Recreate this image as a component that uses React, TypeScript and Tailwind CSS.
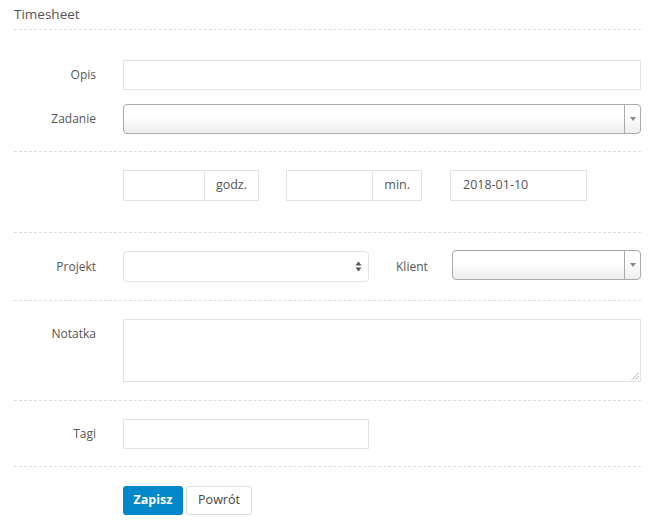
import React from "react";

const font = { fontFamily: '"Open Sans", "Liberation Sans", sans-serif' };

function Label({ children, top = false }: { children: React.ReactNode; top?: boolean }) {
  return (
    <div
      className={`w-[82px] mr-[27px] shrink-0 text-right text-[12px] text-[#555] ${
        top ? "pt-[6px]" : "self-center"
      }`}
    >
      {children}
    </div>
  );
}

function ChosenSelect({ className = "" }: { className?: string }) {
  return (
    <div
      className={`flex h-[30px] rounded-[4px] border border-[#aaa] bg-gradient-to-b from-white from-40% to-[#eee] ${className}`}
    >
      <div className="flex-1" />
      <div className="flex w-[16px] items-center justify-center border-l border-[#aaa]">
        <svg width="6" height="4" viewBox="0 0 6 4">
          <path d="M0 0 L6 0 L3 4 Z" fill="#888" />
        </svg>
      </div>
    </div>
  );
}

function Dash() {
  return <div className="border-t border-dashed border-[#ddd]" />;
}

export default function App() {
  return (
    <div className="w-[655px] h-[528px] bg-white px-[14px]" style={font}>
      <div className="pt-[4px] pb-[5px] text-[13.5px] leading-[20px] text-[#555]">Timesheet</div>
      <Dash />

      {/* Section 1 */}
      <div className="pt-[30px] pb-[17px]">
        <div className="flex h-[30px]">
          <Label>Opis</Label>
          <div className="h-[30px] flex-1 border border-[#e3e3e3] bg-white" />
        </div>
        <div className="mt-[14px] flex">
          <Label>Zadanie</Label>
          <ChosenSelect className="flex-1" />
        </div>
      </div>
      <Dash />

      {/* Section 2 */}
      <div className="pt-[18px] pb-[31px]">
        <div className="flex h-[31px] pl-[109px] text-[12.5px] text-[#555]">
          <div className="flex w-[136px] border border-[#e3e3e3]">
            <div className="flex-1" />
            <div className="flex items-center border-l border-[#e3e3e3] px-[11px]">godz.</div>
          </div>
          <div className="ml-[27px] flex w-[136px] border border-[#e3e3e3]">
            <div className="flex-1" />
            <div className="flex items-center border-l border-[#e3e3e3] px-[11px]">min.</div>
          </div>
          <div className="ml-[28px] flex w-[137px] items-center border border-[#e3e3e3] px-[12px]">
            2018-01-10
          </div>
        </div>
      </div>
      <Dash />

      {/* Section 3 */}
      <div className="pt-[18px] pb-[18px]">
        <div className="flex h-[31px]">
          <Label>Projekt</Label>
          <div className="flex w-[246px] items-center justify-end rounded-[4px] border border-[#e3e3e3] pr-[6px]">
            <svg width="7" height="11" viewBox="0 0 7 11">
              <path d="M0.5 4.5 L6.5 4.5 L3.5 0.5 Z" fill="#555" />
              <path d="M0.5 6.5 L6.5 6.5 L3.5 10.5 Z" fill="#555" />
            </svg>
          </div>
          <div className="ml-[27px] mr-[24px] self-center text-[12px] text-[#555]">Klient</div>
          <ChosenSelect className="flex-1 -mt-[1px]" />
        </div>
      </div>
      <Dash />

      {/* Section 4 */}
      <div className="pt-[18px] pb-[18px]">
        <div className="flex">
          <Label top>Notatka</Label>
          <div className="relative h-[63px] flex-1 border border-[#e3e3e3]">
            <svg className="absolute bottom-[1px] right-[1px]" width="8" height="8" viewBox="0 0 8 8">
              <path d="M7.5 1 L1 7.5 M7.5 4.5 L4.5 7.5" stroke="#555" strokeWidth="1" strokeDasharray="1 1" />
            </svg>
          </div>
        </div>
      </div>
      <Dash />

      {/* Section 5 */}
      <div className="pt-[18px] pb-[17px]">
        <div className="flex h-[30px]">
          <Label>Tagi</Label>
          <div className="w-[246px] border border-[#e3e3e3]" />
        </div>
      </div>
      <Dash />

      {/* Buttons */}
      <div className="flex gap-[3px] pl-[109px] pt-[19px]">
        <button className="h-[29px] w-[60px] rounded-[3px] bg-[#0287ca] text-[12.5px] font-bold text-white">
          Zapisz
        </button>
        <button className="h-[29px] w-[66px] rounded-[3px] border border-[#ddd] bg-white text-[12.5px] text-[#444]">
          Powrót
        </button>
      </div>
    </div>
  );
}
